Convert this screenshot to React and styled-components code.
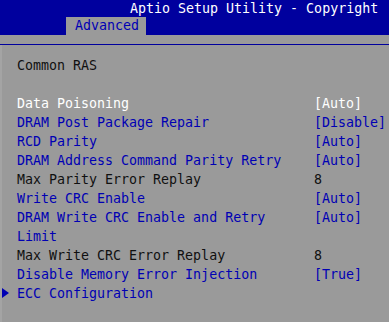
import React from "react";
import styled, { createGlobalStyle } from "styled-components";

const Global = createGlobalStyle`
  html, body { margin: 0; padding: 0; background: #9a9a9a; }
  body { font-family: "DejaVu Sans Mono", "Liberation Mono", monospace; font-size: 13.3px; }
`;

const Screen = styled.div`
  width: 389px;
  height: 322px;
  overflow: hidden;
  background: #9a9a9a;
  display: flex;
  flex-direction: column;
`;

const Header = styled.div`
  background: #00009e;
  display: flex;
  flex-direction: column;
`;

const Title = styled.div`
  color: #ffffff;
  height: 17px;
  line-height: 17px;
  padding-left: 130px;
  white-space: nowrap;
`;

const TabRow = styled.div`
  display: flex;
  height: 18px;
  padding-left: 66px;
`;

const Tab = styled.div`
  background: #9a9a9a;
  color: #0000b4;
  line-height: 18px;
  padding: 0 9px;
  width: 62px;
`;

const Strip = styled.div`
  height: 9px;
  border-bottom: 1px solid #00009e;
`;

const Panel = styled.div`
  flex: 1;
  border-left: 2px solid #a4a4a4;
  padding: 11px 0 0 15px;
  display: flex;
  flex-direction: column;
  line-height: 19px;
`;

const Heading = styled.div`
  color: #101010;
  margin-bottom: 19px;
`;

const Row = styled.div`
  display: grid;
  grid-template-columns: 280px 1fr;
  column-gap: 17px;
  color: ${(p) => (p.$kind === "selected" ? "#ffffff" : p.$kind === "info" ? "#101010" : "#0000b4")};
  position: relative;
`;

const Label = styled.div`
  white-space: normal;
`;

const Value = styled.div`
  white-space: nowrap;
`;

const Arrow = styled.svg`
  position: absolute;
  left: -15px;
  top: 4px;
`;

const rows = [
  { label: "Data Poisoning", value: "[Auto]", kind: "selected" },
  { label: "DRAM Post Package Repair", value: "[Disable]" },
  { label: "RCD Parity", value: "[Auto]" },
  { label: "DRAM Address Command Parity Retry", value: "[Auto]" },
  { label: "Max Parity Error Replay", value: "8", kind: "info" },
  { label: "Write CRC Enable", value: "[Auto]" },
  { label: "DRAM Write CRC Enable and Retry Limit", value: "[Auto]" },
  { label: "Max Write CRC Error Replay", value: "8", kind: "info" },
  { label: "Disable Memory Error Injection", value: "[True]" },
  { label: "ECC Configuration", value: "", submenu: true },
];

export default function App() {
  return (
    <Screen>
      <Global />
      <Header>
        <Title>Aptio Setup Utility - Copyright</Title>
        <TabRow>
          <Tab>Advanced</Tab>
        </TabRow>
      </Header>
      <Strip />
      <Panel>
        <Heading>Common RAS</Heading>
        {rows.map((r) => (
          <Row key={r.label} $kind={r.kind}>
            {r.submenu && (
              <Arrow width="7" height="10" viewBox="0 0 7 10">
                <polygon points="0,0 7,5 0,10" fill="#0000b4" />
              </Arrow>
            )}
            <Label>{r.label}</Label>
            <Value>{r.value}</Value>
          </Row>
        ))}
      </Panel>
    </Screen>
  );
}
